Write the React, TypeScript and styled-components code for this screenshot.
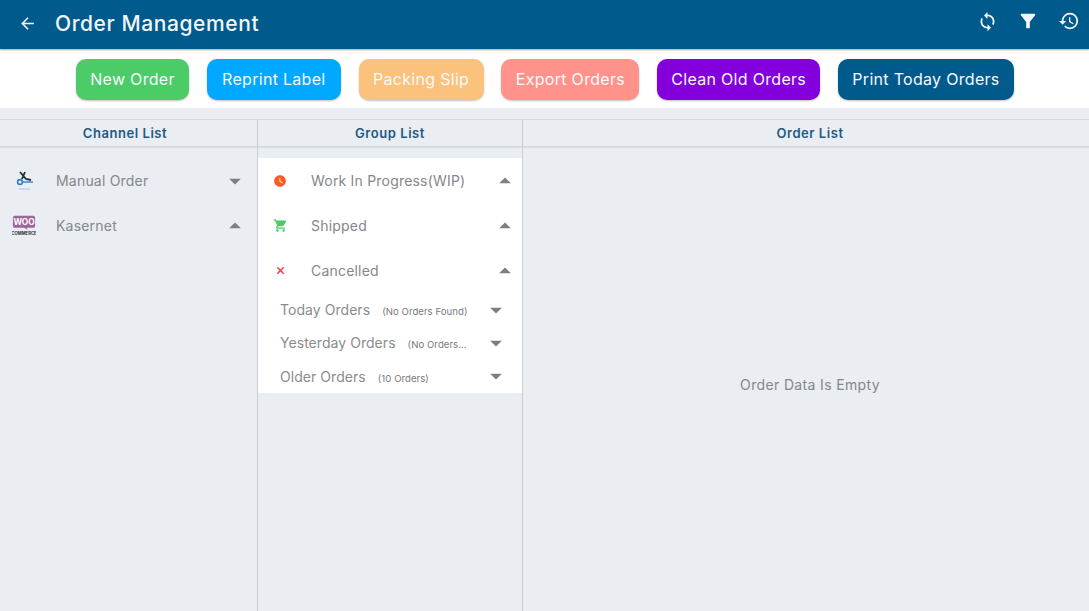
import React from "react";
import styled, { createGlobalStyle } from "styled-components";
import { X } from "lucide-react";
import { MdArrowBack, MdHistory, MdSync, MdFilterAlt, MdShoppingCart, MdWatchLater, MdArrowDropDown, MdArrowDropUp } from "react-icons/md";

const GlobalStyle = createGlobalStyle`
  html, body {
    margin: 0;
    padding: 0;
    height: 100%;
    overflow: hidden;
    background: #eaedf2;
    font-family: Inter, "Open Sans", sans-serif;
  }
`;

const PageContainer = styled.div`
  display: flex;
  flex-direction: column;
  height: 611px;
  width: 1089px;
  background-color: #eaedf2;
`;

const Header = styled.header`
  display: flex;
  align-items: center;
  height: 49px;
  padding: 0 9px 3px 18px;
  box-sizing: border-box;
  background-color: #005b8c;
  color: #f2f6f9;
  box-shadow: 0 1px 2px rgba(0, 0, 0, 0.3);
  z-index: 1;
`;

const Title = styled.h1`
  flex: 1;
  margin: 0 0 0 18px;
  font-size: 21px;
  font-weight: 500;
  letter-spacing: 0.6px;
`;

const HeaderActions = styled.div`
  display: flex;
  align-items: center;
  gap: 19px;
  padding-bottom: 4px;
`;

const Toolbar = styled.div`
  display: flex;
  justify-content: center;
  align-items: center;
  gap: 17.8px;
  height: 58px;
  margin-top: 1px;
  padding-left: 1px;
  background-color: #fff;
`;

const ActionButton = styled.button<{ $bg: string; $width: number }>`
  width: ${(p) => p.$width}px;
  height: 41px;
  padding: 0;
  border: none;
  border-radius: 10px;
  background-color: ${(p) => p.$bg};
  color: #f7f9fb;
  font-family: inherit;
  font-size: 16px;
  font-weight: 400;
  letter-spacing: 0.3px;
  box-shadow: 0 1px 2px rgba(0, 0, 0, 0.25);
`;

const Columns = styled.div`
  flex: 1;
  display: grid;
  grid-template-columns: 258px 265px 1fr;
  margin-top: 11px;
  border-top: 1px solid #d3d6dc;
`;

const Column = styled.section`
  display: flex;
  flex-direction: column;
  border-right: 1px solid #c9ccd2;

  &:last-child {
    border-right: none;
  }
`;

const ColumnTitle = styled.div<{ $shift?: number }>`
  height: 26px;
  display: flex;
  align-items: center;
  justify-content: center;
  padding-left: ${(p) => (p.$shift && p.$shift > 0 ? p.$shift : 0)}px;
  padding-right: ${(p) => (p.$shift && p.$shift < 0 ? -p.$shift : 0)}px;
  border-bottom: 2px solid #d8dbe0;
  color: #1d5a85;
  font-size: 13px;
  font-weight: 600;
  letter-spacing: 0.55px;
`;

const List = styled.div<{ $white?: boolean }>`
  margin-top: 10px;
  background-color: ${(p) => (p.$white ? "#fff" : "transparent")};
`;

const Row = styled.div`
  display: flex;
  align-items: center;
  height: 45px;
  padding: 0 8px 0 12px;
  color: #85878a;
  font-size: 14px;
`;

const RowIcon = styled.span`
  display: flex;
  align-items: center;
  justify-content: center;
  width: 24px;
  margin-right: 20px;
`;

const GroupRow = styled(Row)`
  padding: 0 3px 0 10px;

  ${RowIcon} {
    margin-right: 19px;
  }
`;

const RowLabel = styled.span`
  flex: 1;
  letter-spacing: 0.2px;
`;

const Caret = styled.span`
  display: flex;
  color: #7d7f82;
`;

const SubRow = styled.div`
  display: flex;
  align-items: center;
  height: 33.3px;
  padding: 0 12px 0 22px;
  color: #8a8c8f;
  font-size: 14px;
  letter-spacing: 0.05px;
`;

const SubNote = styled.span`
  flex: 1;
  margin-left: 12px;
  padding-top: 4px;
  font-size: 9.6px;
  color: #77797c;
`;

const EmptyState = styled.div`
  flex: 1;
  display: flex;
  align-items: center;
  justify-content: center;
  padding: 10px 0 0 8px;
  color: #85878a;
  font-size: 14px;
  letter-spacing: 0.35px;
`;

const buttons = [
  { label: "New Order", bg: "#4bcc67", width: 113 },
  { label: "Reprint Label", bg: "#00a8ff", width: 134 },
  { label: "Packing Slip", bg: "#fac27d", width: 125 },
  { label: "Export Orders", bg: "#ff938c", width: 138 },
  { label: "Clean Old Orders", bg: "#8300dc", width: 163 },
  { label: "Print Today Orders", bg: "#005b8c", width: 176 },
];

const ScooterLogo = () => (
  <svg width="24" height="22" viewBox="0 0 24 22">
    <path d="M8 2l6 7 5 1M13 2l-3 7" stroke="#1c2b3a" strokeWidth="1.8" fill="none" />
    <circle cx="8" cy="12" r="2.4" fill="none" stroke="#2f7fd0" strokeWidth="1.6" />
    <path d="M11 12h10" stroke="#2f7fd0" strokeWidth="1.4" />
    <path d="M7 19h11" stroke="#a9c4e4" strokeWidth="1" />
  </svg>
);

const WooLogo = () => (
  <svg width="26" height="24" viewBox="0 0 26 24">
    <path d="M3 1h20a2 2 0 0 1 2 2v9a2 2 0 0 1-2 2h-7l1 2-4-2H3a2 2 0 0 1-2-2V3a2 2 0 0 1 2-2z" fill="#a0659a" />
    <text x="13" y="11" textAnchor="middle" fontSize="9" fontWeight="700" fill="#fff" fontFamily="Inter, sans-serif">WOO</text>
    <text x="13" y="22" textAnchor="middle" fontSize="4.6" fontWeight="700" fill="#333" fontFamily="Inter, sans-serif">COMMERCE</text>
  </svg>
);

const App: React.FC = () => {
  return (
    <PageContainer>
      <GlobalStyle />
      <Header>
        <MdArrowBack size={19} />
        <Title>Order Management</Title>
        <HeaderActions>
          <MdSync size={21} />
          <MdFilterAlt size={22} />
          <MdHistory size={22} />
        </HeaderActions>
      </Header>
      <Toolbar>
        {buttons.map((b) => (
          <ActionButton key={b.label} $bg={b.bg} $width={b.width}>
            {b.label}
          </ActionButton>
        ))}
      </Toolbar>
      <Columns>
        <Column>
          <ColumnTitle $shift={-7}>Channel List</ColumnTitle>
          <List>
            <Row>
              <RowIcon><ScooterLogo /></RowIcon>
              <RowLabel>Manual Order</RowLabel>
              <Caret><MdArrowDropDown size={28} /></Caret>
            </Row>
            <Row>
              <RowIcon><WooLogo /></RowIcon>
              <RowLabel>Kasernet</RowLabel>
              <Caret><MdArrowDropUp size={28} /></Caret>
            </Row>
          </List>
        </Column>
        <Column>
          <ColumnTitle>Group List</ColumnTitle>
          <List $white>
            <GroupRow>
              <RowIcon><MdWatchLater size={14} color="#fb5a22" /></RowIcon>
              <RowLabel>Work In Progress(WIP)</RowLabel>
              <Caret><MdArrowDropUp size={28} /></Caret>
            </GroupRow>
            <GroupRow>
              <RowIcon><MdShoppingCart size={15} color="#4bcc67" /></RowIcon>
              <RowLabel>Shipped</RowLabel>
              <Caret><MdArrowDropUp size={28} /></Caret>
            </GroupRow>
            <GroupRow>
              <RowIcon><X size={11} color="#f4404f" strokeWidth={3.5} /></RowIcon>
              <RowLabel>Cancelled</RowLabel>
              <Caret><MdArrowDropUp size={28} /></Caret>
            </GroupRow>
            <SubRow>
              Today Orders
              <SubNote>(No Orders Found)</SubNote>
              <Caret><MdArrowDropDown size={28} /></Caret>
            </SubRow>
            <SubRow>
              Yesterday Orders
              <SubNote>(No Orders...</SubNote>
              <Caret><MdArrowDropDown size={28} /></Caret>
            </SubRow>
            <SubRow>
              Older Orders
              <SubNote>(10 Orders)</SubNote>
              <Caret><MdArrowDropDown size={28} /></Caret>
            </SubRow>
          </List>
        </Column>
        <Column>
          <ColumnTitle $shift={8}>Order List</ColumnTitle>
          <EmptyState>Order Data Is Empty</EmptyState>
        </Column>
      </Columns>
    </PageContainer>
  );
};

export default App;
